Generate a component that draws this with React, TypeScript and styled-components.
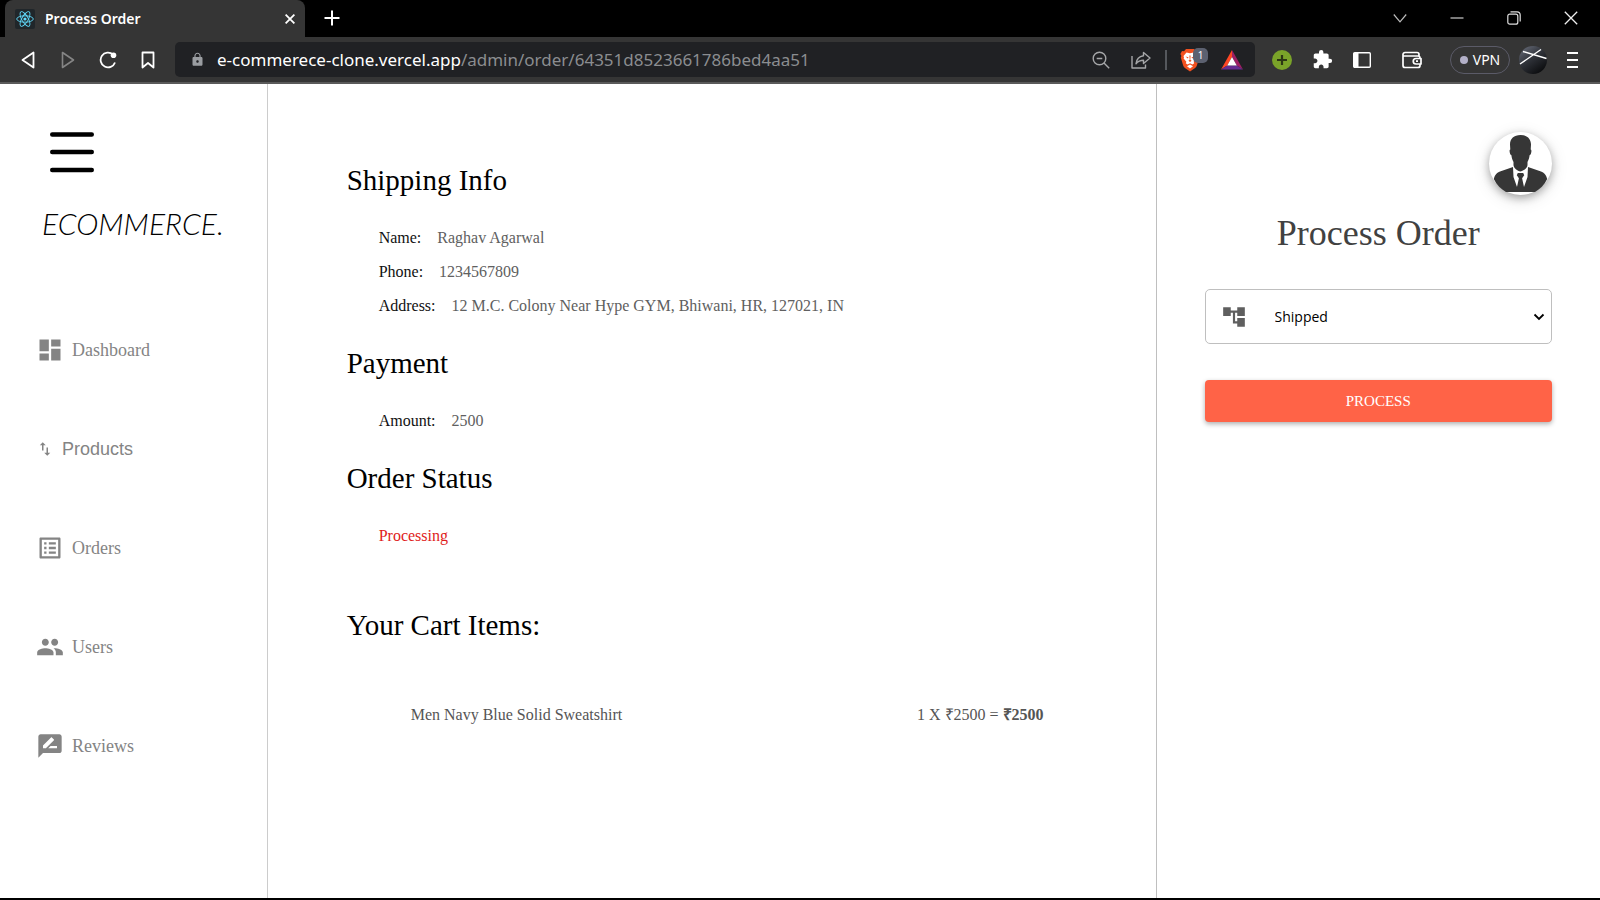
import React, { useState } from "react";
import styled, { createGlobalStyle } from "styled-components";
import {
  MdAccountTree,
  MdDashboard,
  MdExtension,
  MdImportExport,
  MdListAlt,
  MdLock,
  MdPeople,
  MdRateReview,
} from "react-icons/md";

const serif = '"Liberation Serif", "Times New Roman", serif';
const sans = '"Liberation Sans", Arial, sans-serif';
const ui = '"Open Sans", "Noto Sans", sans-serif';
const chrome = '"Noto Sans", "Open Sans", sans-serif';

const GlobalStyle = createGlobalStyle`
  *, *::before, *::after { box-sizing: border-box; }
  body { margin: 0; background: #fff; font-family: ${serif}; }
  button { font: inherit; color: inherit; border: 0; padding: 0; background: none; cursor: pointer; }
  h1, h2, p, ul, dl, dd, dt { margin: 0; padding: 0; }
  ul { list-style: none; }
  svg { display: block; flex: none; }
`;

const Shell = styled.div`
  display: flex;
  flex-direction: column;
  min-height: 100vh;
  border-bottom: 2px solid #000;
`;

/* Browser chrome */

const TabStrip = styled.div`
  display: flex;
  height: 37px;
  padding: 0 1px 0 5px;
  background: #000;
  color: #fff;
  font-family: ${chrome};
`;

const Tab = styled.div`
  display: flex;
  align-items: center;
  gap: 10px;
  width: 300px;
  padding: 0 10px;
  border-radius: 8px 8px 0 0;
  background: #353535;
  font-size: 14px;
  font-weight: 600;
`;

const TabTitle = styled.span`
  flex: 1;
  line-height: 20px;
`;

const StripButton = styled.button<{ $width: number }>`
  display: flex;
  align-items: center;
  justify-content: center;
  width: ${(p) => p.$width}px;
  height: 36px;
  color: #fff;
`;

const WindowControls = styled.div`
  display: flex;
  margin-left: auto;
`;

const Toolbar = styled.div`
  display: flex;
  align-items: center;
  height: 47px;
  padding: 0 8px;
  border-bottom: 2px solid #5a5a5a;
  background: #353535;
  color: #fff;
  font-family: ${chrome};
`;

const ToolButton = styled.button<{ $dim?: boolean }>`
  display: flex;
  flex: none;
  align-items: center;
  justify-content: center;
  width: 40px;
  height: 36px;
  color: ${(p) => (p.$dim ? "#858585" : "#fff")};
`;

const AddressBar = styled.div`
  display: flex;
  flex: 1;
  align-items: center;
  min-width: 0;
  height: 35px;
  margin: 0 7px;
  padding: 0 3px 0 15px;
  border-radius: 5px;
  background: #202124;
`;

const Address = styled.div`
  flex: 1;
  min-width: 0;
  padding-left: 12px;
  overflow: hidden;
  color: #8b8d90;
  font-size: 17px;
  line-height: 24px;
  white-space: nowrap;
`;

const Host = styled.span`
  color: #fff;
`;

const BarDivider = styled.span`
  width: 2px;
  height: 20px;
  margin: 0 5px 0 4px;
  background: #55585d;
`;

const ShieldButton = styled(ToolButton)`
  position: relative;
  padding-right: 4px;
`;

const ShieldCount = styled.span`
  position: absolute;
  top: 6px;
  left: 21px;
  width: 15px;
  height: 15px;
  border-radius: 5px;
  background: #5c6170;
  color: #fff;
  font-size: 10px;
  line-height: 15px;
`;

const VpnButton = styled.button`
  display: flex;
  flex: none;
  align-items: center;
  justify-content: center;
  gap: 5px;
  width: 60px;
  height: 28px;
  margin: 0 9px 0 18px;
  border: 1px solid #5b5b68;
  border-radius: 14px;
  font-size: 14px;
  line-height: 20px;
`;

const VpnDot = styled.span`
  width: 8px;
  height: 8px;
  border-radius: 50%;
  background: #b3b0c8;
`;

const ProfileButton = styled.button`
  flex: none;
  width: 28px;
  height: 28px;
  margin-right: 5px;
  border-radius: 50%;
`;

const WalletSlot = styled.div`
  margin-left: 10px;
`;

/* Admin page */

const Page = styled.div`
  display: grid;
  flex: 1;
  grid-template-columns: 3fr 10fr 5fr;
`;

const Sidebar = styled.aside`
  padding: 48px 36px;
`;

const MenuButton = styled.button`
  display: block;
  margin-left: 14px;
`;

const Logo = styled.p`
  margin: 30px 0 93px 6px;
  color: #000;
  font-family: Lato, sans-serif;
  font-size: 30px;
  font-style: italic;
  font-weight: 300;
  line-height: 40px;
`;

const NavList = styled.ul`
  display: grid;
  gap: 71px;
`;

const NavLink = styled.a<{ $sans?: boolean }>`
  display: flex;
  align-items: center;
  gap: 8px;
  height: 28px;
  color: #848484;
  font-family: ${(p) => (p.$sans ? sans : serif)};
  font-size: 18px;
  text-decoration: none;
`;

const Details = styled.main`
  padding: 80px 80px 80px 79px;
  border-left: 1px solid #ccc;
`;

const Section = styled.section<{ $last?: boolean }>`
  margin-bottom: ${(p) => (p.$last ? 64 : 32)}px;
`;

const SectionTitle = styled.h2`
  margin-bottom: 32px;
  color: #000;
  font-size: 29px;
  font-weight: 400;
  line-height: 32px;
`;

const Facts = styled.dl`
  display: grid;
  gap: 15px;
  padding-left: 32px;
`;

const Fact = styled.div`
  display: flex;
  gap: 16px;
  font-size: 16px;
  line-height: 19px;
`;

const FactName = styled.dt`
  color: #111;
`;

const FactValue = styled.dd`
  color: #606060;
`;

const Status = styled.p`
  padding-left: 32px;
  color: #e01b1b;
  font-size: 16px;
  line-height: 19px;
`;

const CartList = styled.ul`
  padding: 32px 32px 32px 64px;
`;

const CartItem = styled.li`
  display: flex;
  justify-content: space-between;
  color: #555;
  font-size: 16px;
  line-height: 19px;
`;

const ProcessPanel = styled.aside`
  display: flex;
  flex-direction: column;
  padding: 48px;
  border-left: 1px solid #bfbfbf;
`;

const UserButton = styled.button`
  align-self: flex-end;
  width: 63px;
  height: 63px;
  border-radius: 50%;
  background: #fff;
  box-shadow: 0 3px 8px rgba(0, 0, 0, 0.3), 0 4px 18px rgba(0, 0, 0, 0.12);
`;

const ProcessForm = styled.form`
  display: grid;
  gap: 36px;
  margin-top: 18px;
`;

const FormTitle = styled.h1`
  color: #414141;
  font-size: 36px;
  font-weight: 400;
  line-height: 40px;
  text-align: center;
`;

const SelectField = styled.label`
  display: flex;
  align-items: center;
  height: 55px;
  padding: 0 6px 0 15px;
  border: 1px solid #bfbfbf;
  border-radius: 5px;
  color: #5f5f5f;
`;

const StatusSelect = styled.select`
  flex: 1;
  height: 100%;
  margin-left: 28px;
  border: 0;
  outline: 0;
  appearance: none;
  background: transparent;
  color: #000;
  font-family: ${ui};
  font-size: 14px;
`;

const ProcessButton = styled.button`
  height: 42px;
  border-radius: 4px;
  background: #ff6347;
  box-shadow: 0 2px 5px rgba(0, 0, 0, 0.32);
  color: #fff;
  font-size: 15px;
  line-height: 20px;
`;

/* Drawings */

const ReactMark = () => (
  <svg width="20" height="20" viewBox="0 0 20 20" fill="none" stroke="#61dafb" strokeWidth="0.9">
    <rect width="20" height="20" rx="2" fill="#20262a" stroke="none" />
    <ellipse cx="10" cy="10" rx="8.3" ry="3.2" />
    <ellipse cx="10" cy="10" rx="8.3" ry="3.2" transform="rotate(60 10 10)" />
    <ellipse cx="10" cy="10" rx="8.3" ry="3.2" transform="rotate(120 10 10)" />
    <circle cx="10" cy="10" r="1.6" fill="#61dafb" stroke="none" />
  </svg>
);

const BraveMark = () => (
  <svg width="20" height="24" viewBox="0 0 20 24">
    <path d="M6 1h8l2 2.2 2-.2 1.6 3-1 2 .6 1.6L17 17c-.5 1.8-1.500 2.800-3 3.800L10 23.500l-4-2.700c-1.500-1-2.500-2-3-3.800L.8 9.600 1.400 8l-1-2L2 3l2 .2z" fill="#f1501f" />
    <path d="M6.500 4.500L10 5.200l3.500-.7 3 3.500-.5 1.500.4 1-2.800 3.200.6 1.600-1.700 1.300L10 15.300l-2.500 1.300-1.700-1.300.6-1.600L3.600 10.500l.4-1L3.500 8z" fill="#fff" />
    <path d="M10 16.500l3 1.700-3 2.300-3-2.300z" fill="#fff" />
    <path d="M5.500 8.500l3 .8-.7 1.300zM14.500 8.500l-3 .8.700 1.300zM9.400 7.500h1.200l-.3 4.300 1.300.9-1.600 1.200-1.600-1.200 1.300-.9z" fill="#f1501f" />
  </svg>
);

const BatMark = () => (
  <svg width="22" height="20" viewBox="0 0 22 20">
    <path d="M11 0v7L6.200 15.500 0 19.500z" fill="#ff4724" />
    <path d="M11 0l11 19.500-6.200-4L11 7z" fill="#9e1f63" />
    <path d="M0 19.500l6.200-4h9.600l6.200 4z" fill="#662d91" />
    <path d="M11 7l4.800 8.500H6.200z" fill="#fff" />
  </svg>
);

const ProfileMark = () => (
  <svg width="28" height="28" viewBox="0 0 28 28">
    <defs>
      <linearGradient id="globe" x1="0" y1="0" x2="0.7" y2="1">
        <stop offset="0" stopColor="#6f7482" />
        <stop offset="0.5" stopColor="#30333a" />
        <stop offset="1" stopColor="#0b0c0e" />
      </linearGradient>
    </defs>
    <circle cx="14" cy="14" r="14" fill="url(#globe)" />
    <path d="M1 18L22 3.500M4 5.500l23.500 7" stroke="#fff" strokeWidth="1.400" />
  </svg>
);

const UserPortrait = () => (
  <svg width="63" height="63" viewBox="0 0 63 63">
    <path d="M31.500 3c6.500 0 10.500 3.600 10.500 9.600l-.3 4.800c1 .3.900 2.600.2 4.400-.4 1-.9 1.400-1.300 1.500-.3 3-1.100 5-2.100 6.700V33c0 3-4 6-7 6.500-3-.5-7-3.500-7-6.500v-3c-1-1.700-1.800-3.700-2.100-6.700-.4-.1-.9-.5-1.300-1.500-.7-1.800-.8-4.100.2-4.400L21 12.600C21 6.600 25 3 31.500 3z" fill="#363636" />
    <path d="M24 35l-13 4.500c-3 1-5 3-6.200 7.500 3 6 7 10 12.200 13h29c5.200-3 9.200-7 12.200-13-1.200-4.500-3.200-6.500-6.200-7.500L39 35l-.5 10L35 55h-7l-3.500-10z" fill="#363636" />
    <path d="M28.800 41h5.400l1 2.200-2.100 3L35 55v2h-7v-2l1.900-8.800-2.100-3z" fill="#363636" />
  </svg>
);

const navItems = [
  { label: "Dashboard", icon: <MdDashboard size={28} />, sans: false },
  { label: "Products", icon: <MdImportExport size={18} />, sans: true },
  { label: "Orders", icon: <MdListAlt size={28} />, sans: false },
  { label: "Users", icon: <MdPeople size={28} />, sans: false },
  { label: "Reviews", icon: <MdRateReview size={28} />, sans: false },
];

const shipping = [
  { name: "Name:", value: "Raghav Agarwal" },
  { name: "Phone:", value: "1234567809" },
  { name: "Address:", value: "12 M.C. Colony Near Hype GYM, Bhiwani, HR, 127021, IN" },
];

const payment = [{ name: "Amount:", value: "2500" }];

const FactList = ({ items }: { items: { name: string; value: string }[] }) => (
  <Facts>
    {items.map((item) => (
      <Fact key={item.name}>
        <FactName>{item.name}</FactName>
        <FactValue>{item.value}</FactValue>
      </Fact>
    ))}
  </Facts>
);

const BrowserBar = () => (
  <header>
    <TabStrip>
      <Tab>
        <ReactMark />
        <TabTitle>Process Order</TabTitle>
        <button aria-label="Close tab">
          <svg width="10" height="10" viewBox="0 0 10 10" stroke="#fff" strokeWidth="1.800">
            <path d="M.6.600l8.800 8.800M9.400.600L.6 9.400" />
          </svg>
        </button>
      </Tab>
      <StripButton $width={54} aria-label="New tab">
        <svg width="16" height="16" viewBox="0 0 16 16" stroke="#fff" strokeWidth="2">
          <path d="M8 .5v15M.5 8h15" />
        </svg>
      </StripButton>
      <WindowControls>
        <StripButton $width={57} aria-label="Search tabs">
          <svg width="14" height="14" viewBox="0 0 14 14" fill="none" stroke="#bbb" strokeWidth="1.200">
            <path d="M.8 3.500L7 10.800l6.200-7.300" />
          </svg>
        </StripButton>
        <StripButton $width={57} aria-label="Minimize">
          <svg width="14" height="14" viewBox="0 0 14 14" stroke="#ccc" strokeWidth="1.200">
            <path d="M.5 7h13" />
          </svg>
        </StripButton>
        <StripButton $width={57} aria-label="Restore">
          <svg width="14" height="14" viewBox="0 0 14 14" fill="none" stroke="#ddd" strokeWidth="1.200">
            <rect x=".8" y="3.200" width="10" height="10" rx="2" />
            <path d="M3.500.800H10A3.200 3.200 0 0 1 13.200 4v6.500" />
          </svg>
        </StripButton>
        <StripButton $width={57} aria-label="Close window">
          <svg width="14" height="14" viewBox="0 0 14 14" stroke="#eee" strokeWidth="1.300">
            <path d="M.8.800l12.400 12.400M13.200.800L.8 13.200" />
          </svg>
        </StripButton>
      </WindowControls>
    </TabStrip>
    <Toolbar>
      <ToolButton aria-label="Back">
        <svg width="14" height="18" viewBox="0 0 14 18" fill="none" stroke="currentColor" strokeWidth="1.800" strokeLinejoin="round">
          <path d="M12.500 1.500v15L1.500 9z" />
        </svg>
      </ToolButton>
      <ToolButton $dim aria-label="Forward">
        <svg width="14" height="18" viewBox="0 0 14 18" fill="none" stroke="currentColor" strokeWidth="1.600" strokeLinejoin="round">
          <path d="M1.500 1.500v15L12.500 9z" />
        </svg>
      </ToolButton>
      <ToolButton aria-label="Reload">
        <svg width="18" height="18" viewBox="0 0 18 18" fill="none" stroke="currentColor" strokeWidth="1.800">
          <path d="M14 3.500A7.400 7.400 0 1 0 16 11.500" />
          <circle cx="14.500" cy="4.300" r="2.800" fill="currentColor" stroke="none" />
        </svg>
      </ToolButton>
      <ToolButton aria-label="Bookmark">
        <svg width="14" height="18" viewBox="0 0 14 18" fill="none" stroke="currentColor" strokeWidth="1.800" strokeLinejoin="round">
          <path d="M1.500 1.500h11v15L7 12l-5.500 4.500z" />
        </svg>
      </ToolButton>
      <AddressBar>
        <MdLock size={15} color="#9a9da1" />
        <Address role="textbox" aria-label="Address" contentEditable suppressContentEditableWarning spellCheck={false}>
          <Host>e-commerece-clone.vercel.app</Host>/admin/order/64351d8523661786bed4aa51
        </Address>
        <ToolButton aria-label="Zoom out">
          <svg width="18" height="18" viewBox="0 0 18 18" fill="none" stroke="#a5a6a8" strokeWidth="1.400">
            <circle cx="7.500" cy="7.500" r="6.300" />
            <path d="M12 12l5.200 5.200M4.700 7.500h5.600" />
          </svg>
        </ToolButton>
        <ToolButton aria-label="Share">
          <svg width="20" height="18" viewBox="0 0 20 18" fill="none" stroke="#a5a6a8" strokeWidth="1.400" strokeLinejoin="round">
            <path d="M1 5v12h13.500v-3.500" />
            <path d="M12.500 1.500L19 7l-6.500 5.500V9.300c-3.500 0-5.500 1-7.500 3.500.5-4.500 3-7.300 7.500-8z" />
          </svg>
        </ToolButton>
        <BarDivider />
        <ShieldButton aria-label="Brave Shields">
          <BraveMark />
          <ShieldCount>1</ShieldCount>
        </ShieldButton>
        <ToolButton aria-label="Rewards">
          <BatMark />
        </ToolButton>
      </AddressBar>
      <ToolButton aria-label="Add">
        <svg width="20" height="20" viewBox="0 0 20 20">
          <circle cx="10" cy="10" r="10" fill="#7aa329" />
          <path d="M10 5v10M5 10h10" stroke="#2c3614" strokeWidth="2.200" />
        </svg>
      </ToolButton>
      <ToolButton aria-label="Extensions">
        <MdExtension size={21} />
      </ToolButton>
      <ToolButton aria-label="Side panel">
        <svg width="18" height="16" viewBox="0 0 18 16" fill="none" stroke="currentColor" strokeWidth="1.400">
          <rect x=".7" y=".7" width="16.600" height="14.600" rx="1" />
          <path d="M1 1h4.500v14H1z" fill="currentColor" stroke="none" />
        </svg>
      </ToolButton>
      <WalletSlot>
        <ToolButton aria-label="Wallet">
          <svg width="20" height="18" viewBox="0 0 20 18" fill="none" stroke="currentColor" strokeWidth="1.700" strokeLinejoin="round">
            <path d="M17 6V3.500A2 2 0 0 0 15 1.500H3A2 2 0 0 0 1 3.500v11a2 2 0 0 0 2 2h13a2 2 0 0 0 2-2V13M1.500 5H16a2 2 0 0 1 2 2v.5" />
            <path d="M19 7.500h-5a2.700 2.700 0 0 0 0 5.500h5zM14 10.200h2" />
          </svg>
        </ToolButton>
      </WalletSlot>
      <VpnButton>
        <VpnDot />
        VPN
      </VpnButton>
      <ProfileButton aria-label="Profile">
        <ProfileMark />
      </ProfileButton>
      <ToolButton aria-label="Browser menu">
        <svg width="11" height="16" viewBox="0 0 11 16" stroke="currentColor" strokeWidth="1.800">
          <path d="M0 1h11M0 8h11M0 15h11" />
        </svg>
      </ToolButton>
    </Toolbar>
  </header>
);

export default function App() {
  const [status, setStatus] = useState("Shipped");

  return (
    <Shell>
      <GlobalStyle />
      <BrowserBar />
      <Page>
        <Sidebar>
          <MenuButton aria-label="Toggle menu">
            <svg width="44" height="41" viewBox="0 0 44 41" stroke="#000" strokeWidth="4.400" strokeLinecap="round">
              <path d="M2.200 2.500h39.600M2.200 20h39.600M2.200 38h39.600" />
            </svg>
          </MenuButton>
          <Logo>ECOMMERCE.</Logo>
          <nav>
            <NavList>
              {navItems.map((item) => (
                <li key={item.label}>
                  <NavLink href="#" $sans={item.sans}>
                    {item.icon}
                    {item.label}
                  </NavLink>
                </li>
              ))}
            </NavList>
          </nav>
        </Sidebar>

        <Details>
          <Section>
            <SectionTitle>Shipping Info</SectionTitle>
            <FactList items={shipping} />
          </Section>
          <Section>
            <SectionTitle>Payment</SectionTitle>
            <FactList items={payment} />
          </Section>
          <Section $last>
            <SectionTitle>Order Status</SectionTitle>
            <Status>Processing</Status>
          </Section>
          <section>
            <SectionTitle>Your Cart Items:</SectionTitle>
            <CartList>
              <CartItem>
                <span>Men Navy Blue Solid Sweatshirt</span>
                <span>
                  1 X ₹2500 = <b>₹2500</b>
                </span>
              </CartItem>
            </CartList>
          </section>
        </Details>

        <ProcessPanel>
          <UserButton aria-label="Account">
            <UserPortrait />
          </UserButton>
          <ProcessForm onSubmit={(e) => e.preventDefault()}>
            <FormTitle>Process Order</FormTitle>
            <SelectField>
              <MdAccountTree size={26} />
              <StatusSelect aria-label="Order status" value={status} onChange={(e) => setStatus(e.target.value)}>
                <option>Shipped</option>
                <option>Delivered</option>
              </StatusSelect>
              <svg width="12" height="8" viewBox="0 0 12 8" fill="none" stroke="#000" strokeWidth="1.800">
                <path d="M1.500 1.500l4.500 4.500 4.500-4.500" />
              </svg>
            </SelectField>
            <ProcessButton type="submit">PROCESS</ProcessButton>
          </ProcessForm>
        </ProcessPanel>
      </Page>
    </Shell>
  );
}
